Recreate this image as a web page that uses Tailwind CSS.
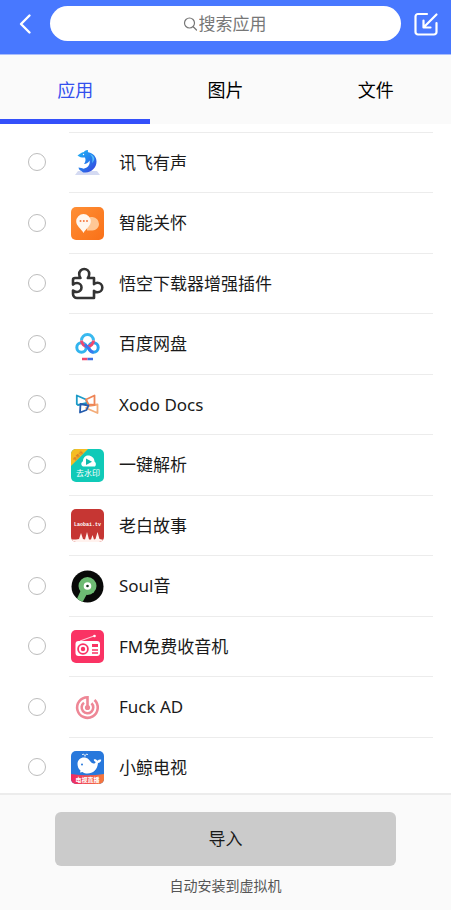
<!DOCTYPE html>
<html lang="zh-CN">
<head>
  <meta charset="UTF-8">
  <meta name="viewport" content="width=device-width, initial-scale=1.0">
  <title>导入应用</title>
  <script src="https://cdn.jsdelivr.net/npm/@tailwindcss/browser@4"></script>
</head>
<body class="h-screen flex flex-col overflow-hidden bg-white text-[#1a1a1a] font-['Noto_Sans','Noto_Sans_CJK_SC',sans-serif]">
  <header class="h-[55px] shrink-0 flex items-start gap-3 pt-[6px] pl-[14px] pr-3 bg-[#4878ff] border-b border-[#a9bdfb] text-white">
    <button type="button" aria-label="返回" class="w-6 h-[35px] flex items-center justify-center">
      <svg class="w-6 h-6" viewBox="0 0 24 24" fill="none" stroke="currentColor" stroke-width="2.4" stroke-linecap="round" stroke-linejoin="round"><path d="M15.500 3.500 7 12l8.500 8.500"/></svg>
    </button>
    <label class="flex-1 h-[35px] flex items-center justify-center rounded-full bg-white text-[#777]">
      <svg class="w-4 h-4" viewBox="0 0 16 16" fill="none" stroke="currentColor" stroke-width="1.200" stroke-linecap="round"><circle cx="6.500" cy="7" r="5"/><path d="m10.500 11 3 3"/></svg>
      <input type="text" aria-label="搜索应用" placeholder="搜索应用" class="w-[70px] text-[17px] leading-6 outline-none placeholder:text-[#777]">
    </label>
    <button type="button" aria-label="导入" class="w-[26px] h-[35px] flex items-center justify-center">
      <svg class="w-[26px] h-[26px]" viewBox="0 0 26 26" fill="none" stroke="currentColor" stroke-width="2.200" stroke-linecap="round" stroke-linejoin="round"><path d="M14 3H5a2.500 2.500 0 0 0-2.500 2.500V21A2.500 2.500 0 0 0 5 23.500h16a2.500 2.500 0 0 0 2.500-2.500v-9"/><path d="M23.500 3.500 11 16M10.500 9.500v7h7"/></svg>
    </button>
  </header>

  <nav class="h-[69px] shrink-0 grid grid-cols-3 bg-[#fafafa] text-lg text-black">
    <button type="button" class="border-y-[5px] border-t-transparent border-b-[#3450fa] text-[#3450ee]">应用</button>
    <button type="button" class="border-y-[5px] border-transparent">图片</button>
    <button type="button" class="border-y-[5px] border-transparent">文件</button>
  </nav>

  <main class="flex-1 min-h-0 overflow-y-auto [scrollbar-width:none] pt-2">
    <ul class="text-[17px] leading-6 *:h-[60px] *:even:h-[61px] *:pl-7 *:pr-[18px]">
      <li>
        <label class="h-full flex items-center">
          <input type="radio" name="app" class="appearance-none w-[18px] h-[18px] shrink-0 rounded-full border border-[#bdbdbd] checked:bg-[#3450fa]">
          <span class="h-full flex-1 ml-[23px] pl-[2px] flex items-center gap-[15px] border-t border-[#ececec]">
            <svg class="w-[33px] h-[33px]" viewBox="0 0 33 33">
              <defs><linearGradient id="dolphin" x1="0" y1="0" x2=".8" y2="1"><stop offset="0" stop-color="#25b9f5"/><stop offset=".5" stop-color="#2383ee"/><stop offset="1" stop-color="#3848df"/></linearGradient></defs>
              <path d="M7 25h19l3 4H4z" fill="#d4daf2"/>
              <path d="M6.500 9.500C8.500 8 10 6.500 13 6c.3-1 1.500-2 4-2-.3.800-.3 1.500.2 2.300C22.500 7.500 25.500 11 25.500 15.500c0 6-4.500 10.500-11 11-2.500.2-3.500-.5-4-1.500-1.500-.5-3-2-3-3.500 2 .3 3.500.3 5 1.300 4-1 7-3.800 6-8.300-1 2-3 3.500-5.500 3.500 1.500-2 2-4.200 1-6.500-2.500.2-5 0-7.500-2z" fill="url(#dolphin)"/>
              <path d="M18.500 8c3 2 3.500 5 2.500 9 1.500-1.500 2.300-3 2.300-4.500-.3-2-2-3.800-4.800-4.500z" fill="#55bff8"/>
              <circle cx="12.500" cy="8.500" r=".7" fill="#fff"/>
            </svg>
            <span>讯飞有声</span>
          </span>
        </label>
      </li>
      <li>
        <label class="h-full flex items-center">
          <input type="radio" name="app" class="appearance-none w-[18px] h-[18px] shrink-0 rounded-full border border-[#bdbdbd] checked:bg-[#3450fa]">
          <span class="h-full flex-1 ml-[23px] pl-[2px] flex items-center gap-[15px] border-t border-[#ececec]">
            <svg class="w-[33px] h-[33px]" viewBox="0 0 33 33">
              <defs><linearGradient id="care" x1="0" y1="0" x2="1" y2="1"><stop offset="0" stop-color="#ff8f35"/><stop offset="1" stop-color="#f97018"/></linearGradient></defs>
              <rect width="33" height="33" rx="5" fill="url(#care)"/>
              <path d="M21.500 10a7 7 0 0 1 6.500 7c0 3.500-3 6.500-6.500 6.500H16V12c1.500-1.500 3-2 5.500-2z" fill="#ffc795"/>
              <path d="M12.500 7a7.300 7.300 0 0 1 7.300 7.300c0 4.700-4.800 7.200-7.300 11.700-2.500-4.500-7.300-7-7.300-11.700A7.300 7.300 0 0 1 12.500 7z" fill="#fff7ef"/>
              <g fill="#f47b45"><circle cx="9.500" cy="14" r="1"/><circle cx="12.800" cy="14" r="1"/><circle cx="16" cy="14" r="1"/></g>
            </svg>
            <span>智能关怀</span>
          </span>
        </label>
      </li>
      <li>
        <label class="h-full flex items-center">
          <input type="radio" name="app" class="appearance-none w-[18px] h-[18px] shrink-0 rounded-full border border-[#bdbdbd] checked:bg-[#3450fa]">
          <span class="h-full flex-1 ml-[23px] pl-[2px] flex items-center gap-[15px] border-t border-[#ececec]">
            <svg class="w-[33px] h-[33px]" viewBox="0 0 33 33" fill="none" stroke="#333" stroke-width="2.600" stroke-linejoin="round">
              <path d="M4 11h5.500c-1-1.200-1.300-2.500-1.300-4a5 5 0 0 1 10 0c0 1.500-.4 2.800-1.400 4H23v6.200c1-1 2-1.500 3.500-1.500a4.800 4.800 0 0 1 0 9.600c-1.500 0-2.500-.4-3.500-1.500V31H6a4 4 0 0 1-4-4v-3.500C3 24.500 4.500 25 6 25a4.500 4.500 0 0 0 0-9c-1.500 0-3 .5-4 1.500V13a2 2 0 0 1 2-2z"/>
            </svg>
            <span>悟空下载器增强插件</span>
          </span>
        </label>
      </li>
      <li>
        <label class="h-full flex items-center">
          <input type="radio" name="app" class="appearance-none w-[18px] h-[18px] shrink-0 rounded-full border border-[#bdbdbd] checked:bg-[#3450fa]">
          <span class="h-full flex-1 ml-[23px] pl-[2px] flex items-center gap-[15px] border-t border-[#ececec]">
            <svg class="w-[33px] h-[33px]" viewBox="0 0 33 33" fill="none" stroke-width="3">
              <circle cx="10.500" cy="19.500" r="4.700" stroke="#32b4ee"/>
              <circle cx="22.500" cy="19.500" r="4.700" stroke="#2aa4ef"/>
              <path d="M10.500 12.500a6 6 0 0 1 12 0" stroke="#39b9ef"/>
              <path d="M10.500 12.500a6 6 0 0 0 12 0" stroke="#f0486f"/>
              <path d="m14 16.500 5 5.500c1 1.300 2 2 3.500 2.200" stroke="#3879ef"/>
              <path d="M11 31h5.500" stroke="#f0486f" stroke-width="2.500"/><path d="M16.500 31H22" stroke="#3f70e0" stroke-width="2.500"/>
            </svg>
            <span>百度网盘</span>
          </span>
        </label>
      </li>
      <li>
        <label class="h-full flex items-center">
          <input type="radio" name="app" class="appearance-none w-[18px] h-[18px] shrink-0 rounded-full border border-[#bdbdbd] checked:bg-[#3450fa]">
          <span class="h-full flex-1 ml-[23px] pl-[2px] flex items-center gap-[15px] border-t border-[#ececec]">
            <svg class="w-[33px] h-[33px]" viewBox="0 0 33 33" fill="none" stroke-width="1.800" stroke-linejoin="round">
              <path d="m18 18 8.500-1.500V25L15 20z" stroke="#f3ac79"/>
              <path d="M5.800 7.500 15 11.500l1 3.500-9 2-1.200-1z" stroke="#1d9bc7"/>
              <path d="m15 11.500 8.500-4V17l-6-.5z" stroke="#ee8556"/>
              <path d="m9.500 16 8 1.500-2 4.500-6.500 2.500z" stroke="#245cad"/>
            </svg>
            <span>Xodo Docs</span>
          </span>
        </label>
      </li>
      <li>
        <label class="h-full flex items-center">
          <input type="radio" name="app" class="appearance-none w-[18px] h-[18px] shrink-0 rounded-full border border-[#bdbdbd] checked:bg-[#3450fa]">
          <span class="h-full flex-1 ml-[23px] pl-[2px] flex items-center gap-[15px] border-t border-[#ececec]">
            <svg class="w-[33px] h-[33px]" viewBox="0 0 33 33">
              <defs><clipPath id="tile"><rect width="33" height="33" rx="5"/></clipPath></defs>
              <g clip-path="url(#tile)">
                <path d="M0 0h33v33H0z" fill="#10cab8"/>
                <path d="M0 0h17L0 17z" fill="#f5bd24"/>
                <text x="8" y="8" transform="rotate(-45 8 8)" text-anchor="middle" font-size="4" fill="#c9602b">免费版</text>
                <path d="M17 6.500c3.500 0 6.500 2.500 6.500 6 1.500 1 2 3.500.5 5H12c-2-1-2.500-4 0-5.200C12 9 14 6.500 17 6.500z" fill="#fff"/>
                <path d="m15 9.500 6 3.200-6 3.200z" fill="#10b9ab"/>
                <text x="17" y="27" text-anchor="middle" font-size="8" fill="#fff">去水印</text>
              </g>
            </svg>
            <span>一键解析</span>
          </span>
        </label>
      </li>
      <li>
        <label class="h-full flex items-center">
          <input type="radio" name="app" class="appearance-none w-[18px] h-[18px] shrink-0 rounded-full border border-[#bdbdbd] checked:bg-[#3450fa]">
          <span class="h-full flex-1 ml-[23px] pl-[2px] flex items-center gap-[15px] border-t border-[#ececec]">
            <svg class="w-[33px] h-[33px]" viewBox="0 0 33 33">
              <g clip-path="url(#tile)">
                <path d="M0 0h33v33H0z" fill="#c63633"/>
                <text x="16.500" y="16.500" text-anchor="middle" font-family="Liberation Mono" font-weight="bold" font-size="5" fill="#fff">Laobai.tv</text>
                <path d="M0 33v-2.500h5L8 30l2-6 2 6 2 .5 2-7.500 2 7.500h2l1.500-4.500 1.500 4.500 1.500-.5 2-7 2 7 4.500 1v2z" fill="#fff2ee"/>
              </g>
            </svg>
            <span>老白故事</span>
          </span>
        </label>
      </li>
      <li>
        <label class="h-full flex items-center">
          <input type="radio" name="app" class="appearance-none w-[18px] h-[18px] shrink-0 rounded-full border border-[#bdbdbd] checked:bg-[#3450fa]">
          <span class="h-full flex-1 ml-[23px] pl-[2px] flex items-center gap-[15px] border-t border-[#ececec]">
            <svg class="w-[33px] h-[33px]" viewBox="0 0 33 33">
              <defs><clipPath id="disc"><circle cx="16.500" cy="16.500" r="16"/></clipPath></defs>
              <g clip-path="url(#disc)">
                <path d="M0 0h33v33H0z" fill="#080908"/>
                <path d="m10 20-6 13h7l5-9z" fill="#6dbb73"/>
                <circle cx="16.500" cy="16" r="9" fill="#6dbb73"/>
                <circle cx="16.500" cy="16" r="3.800" fill="#fff"/>
                <circle cx="16.500" cy="16" r="1.300" fill="#173c20"/>
              </g>
            </svg>
            <span>Soul音</span>
          </span>
        </label>
      </li>
      <li>
        <label class="h-full flex items-center">
          <input type="radio" name="app" class="appearance-none w-[18px] h-[18px] shrink-0 rounded-full border border-[#bdbdbd] checked:bg-[#3450fa]">
          <span class="h-full flex-1 ml-[23px] pl-[2px] flex items-center gap-[15px] border-t border-[#ececec]">
            <svg class="w-[33px] h-[33px]" viewBox="0 0 33 33">
              <rect width="33" height="33" rx="5" fill="#fa3364"/>
              <path d="m9 11 14-5" stroke="#ffc8d4" stroke-width="1.200"/><circle cx="23.500" cy="6" r="1.300" fill="#fff"/>
              <rect x="4.500" y="11" width="24.500" height="15" rx="3" fill="#fff"/>
              <circle cx="12" cy="19" r="5.800" fill="#fa3364"/><circle cx="12" cy="19" r="4" fill="#fff"/><circle cx="12" cy="19" r="2.200" fill="#fa3364"/>
              <path d="M21 14h6v3h-6z" fill="#fa3364"/><path d="M21 20h6M21 23h6" stroke="#fa3364" stroke-width="1.600"/>
            </svg>
            <span>FM免费收音机</span>
          </span>
        </label>
      </li>
      <li>
        <label class="h-full flex items-center">
          <input type="radio" name="app" class="appearance-none w-[18px] h-[18px] shrink-0 rounded-full border border-[#bdbdbd] checked:bg-[#3450fa]">
          <span class="h-full flex-1 ml-[23px] pl-[2px] flex items-center gap-[15px] border-t border-[#ececec]">
            <svg class="w-[33px] h-[33px]" viewBox="0 0 33 33" fill="none" stroke="#ee8796" stroke-width="2.600">
              <path d="M23.500 9a10.300 10.300 0 1 1-7-2.800v10.300"/>
              <path d="M20.500 12.300a5.800 5.800 0 1 1-7.500-.5"/>
              <circle cx="16.500" cy="16.500" r="1.300" fill="#ee8796"/>
            </svg>
            <span>Fuck AD</span>
          </span>
        </label>
      </li>
      <li>
        <label class="h-full flex items-center">
          <input type="radio" name="app" class="appearance-none w-[18px] h-[18px] shrink-0 rounded-full border border-[#bdbdbd] checked:bg-[#3450fa]">
          <span class="h-full flex-1 ml-[23px] pl-[2px] flex items-center gap-[15px] border-t border-[#ececec]">
            <svg class="w-[33px] h-[33px]" viewBox="0 0 33 33">
              <defs><linearGradient id="tv"><stop offset="0" stop-color="#ed2965"/><stop offset="1" stop-color="#f57b3c"/></linearGradient></defs>
              <g clip-path="url(#tile)">
                <path d="M0 0h33v33H0z" fill="#2878dc"/>
                <path d="M0 23q16.500 2.500 33 0v10H0z" fill="url(#tv)"/>
                <path d="M6.500 13c0-4.500 3.500-7 7.500-6.500 4.500.5 5 5.500 8.500 6 1.300.1 2-.7 2.200-1.500-1.700-.7-2.200-1.700-1.700-2.700 1.500-.3 2.800.4 3.500 1.500 1-1.100 2.300-1.600 3.800-1-.2 2-1.500 3.200-3.300 3.200C26.500 18.500 22 22.500 16.500 22.500c-2 0-3.500-.5-5-1.500l-2.500.5.500-2c-2-1.500-3-4-3-6.500z" fill="#fff"/>
                <path d="M14 5.500V4.500c-1-1.500-2-1.500-3-.7m3 .7c1-1.500 2-1.500 3-.7" fill="none" stroke="#fff"/>
                <circle cx="11" cy="13.500" r="1" fill="#2878dc"/>
                <text x="16.500" y="30.500" text-anchor="middle" font-size="6" font-weight="bold" fill="#fff">电视直播</text>
              </g>
            </svg>
            <span>小鲸电视</span>
          </span>
        </label>
      </li>
    </ul>
  </main>

  <footer class="h-[117px] shrink-0 flex flex-col items-center px-[55px] pt-[17px] border-t-2 border-[#ececec] bg-[#fafafa]">
    <button type="button" class="w-full h-[54px] rounded-md bg-[#cbcbcb] text-[17px]">导入</button>
    <p class="mt-[10px] text-sm text-[#555]">自动安装到虚拟机</p>
  </footer>
</body>
</html>
